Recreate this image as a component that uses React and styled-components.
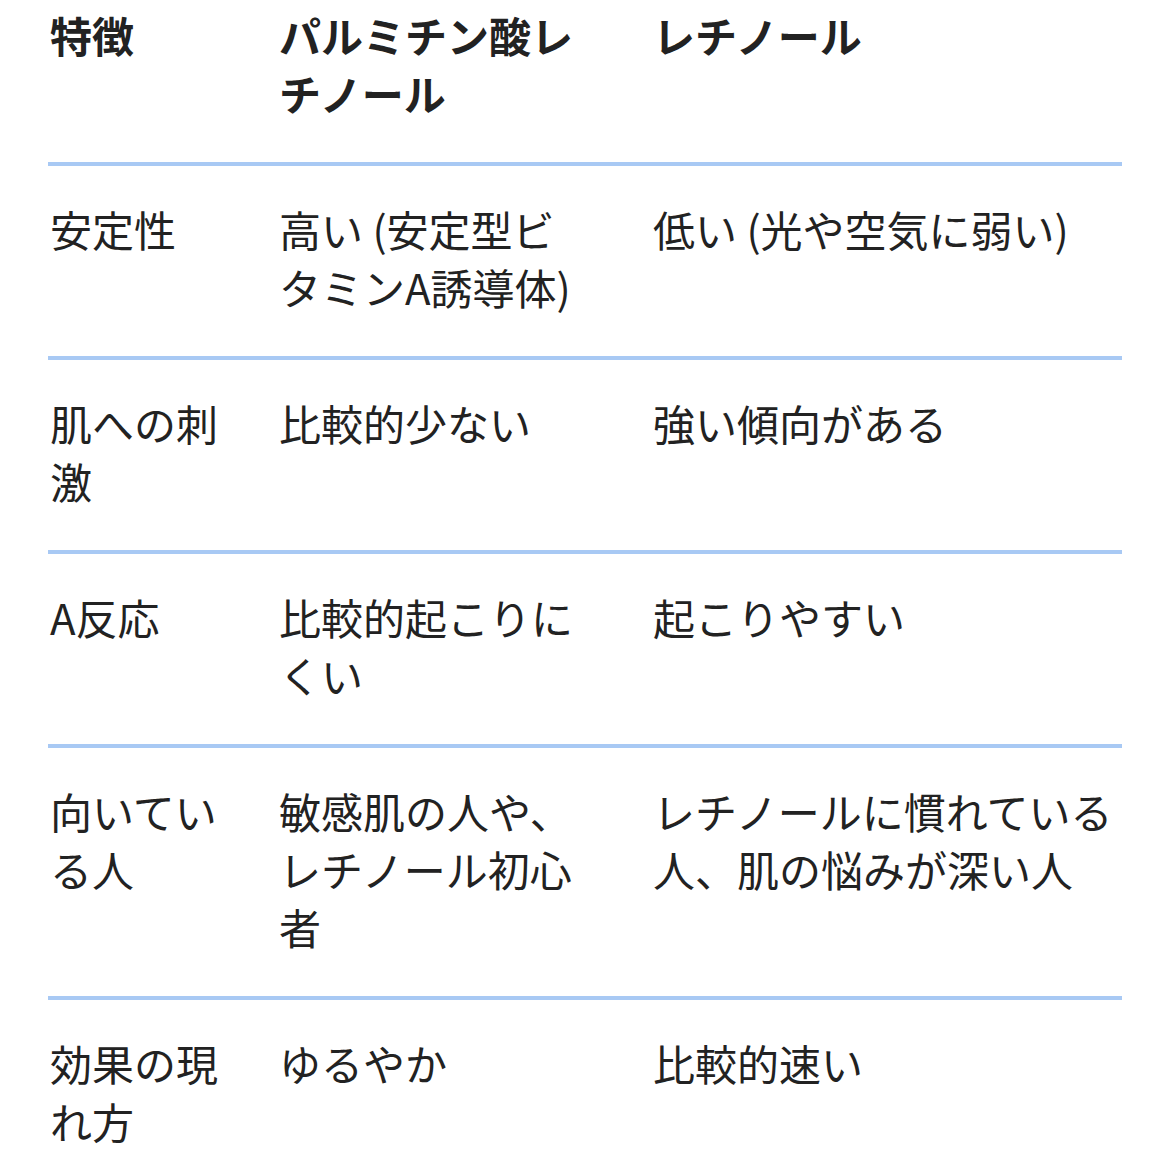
import React from 'react';
import styled, { createGlobalStyle } from 'styled-components';

const GlobalStyle = createGlobalStyle`
  html, body {
    margin: 0;
    padding: 0;
    background: #ffffff;
  }
  body {
    font-family: "Noto Sans CJK JP", "Noto Sans", sans-serif;
    color: #222222;
  }
`;

const Table = styled.div`
  width: 1074px;
  margin-left: 48px;
`;

const Row = styled.div`
  display: grid;
  grid-template-columns: 229px 374px 1fr;
  padding: ${props => (props.$head ? '6px 0 40px 2px' : '34px 0 40px 2px')};
  border-bottom: 4px solid #a8c9f4;
`;

const Cell = styled.div`
  font-size: 42px;
  line-height: 58px;
  font-weight: ${props => (props.$head ? 700 : 400)};
  padding-right: 40px;
  word-break: break-all;

  &:nth-child(2) {
    padding-right: 75px;
  }

  &:last-child {
    padding-right: 0;
  }
`;

const header = ['特徴', 'パルミチン酸レチノール', 'レチノール'];

const rows = [
  ['安定性', '高い (安定型ビタミンA誘導体)', '低い (光や空気に弱い)'],
  ['肌への刺激', '比較的少ない', '強い傾向がある'],
  ['A反応', '比較的起こりにくい', '起こりやすい'],
  ['向いている人', '敏感肌の人や、レチノール初心者', 'レチノールに慣れている人、肌の悩みが深い人'],
  ['効果の現れ方', 'ゆるやか', '比較的速い'],
];

const App = () => (
  <>
    <GlobalStyle />
    <Table>
      <Row $head>
        {header.map((text) => (
          <Cell key={text} $head>{text}</Cell>
        ))}
      </Row>
      {rows.map((row) => (
        <Row key={row[0]}>
          {row.map((text, i) => (
            <Cell key={i}>{text}</Cell>
          ))}
        </Row>
      ))}
    </Table>
  </>
);

export default App;
